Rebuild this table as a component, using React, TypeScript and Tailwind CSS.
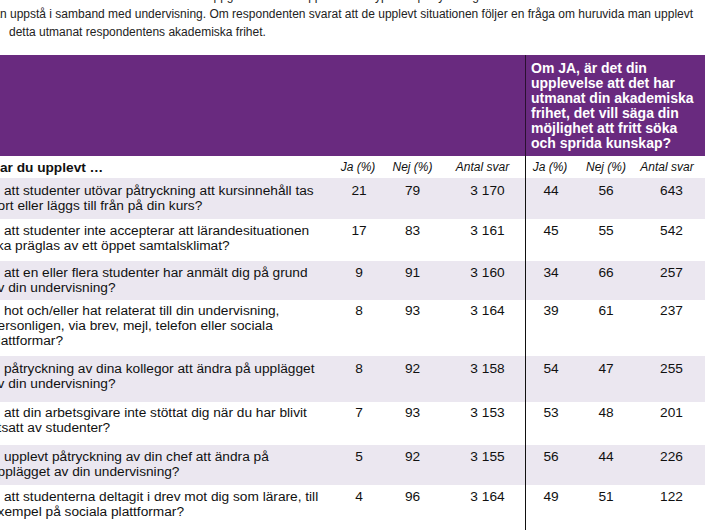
import React from "react";

type Row = {
  lines: string[];
  vals: string[];
  h: string;
  pt: string;
  shaded: boolean;
};

const rows: Row[] = [
  {
    lines: ["att studenter utövar påtryckning att kursinnehåll tas", "bort eller läggs till från på din kurs?"],
    vals: ["21", "79", "3 170", "44", "56", "643"],
    h: "h-[41px]",
    pt: "pt-[5px]",
    shaded: true,
  },
  {
    lines: ["att studenter inte accepterar att lärandesituationen", "ska präglas av ett öppet samtalsklimat?"],
    vals: ["17", "83", "3 161", "45", "55", "542"],
    h: "h-[42px]",
    pt: "pt-[4px]",
    shaded: false,
  },
  {
    lines: ["att en eller flera studenter har anmält dig på grund", "av din undervisning?"],
    vals: ["9", "91", "3 160", "34", "66", "257"],
    h: "h-[39px]",
    pt: "pt-[4px]",
    shaded: true,
  },
  {
    lines: [
      "hot och/eller hat relaterat till din undervisning,",
      "personligen, via brev, mejl, telefon eller sociala",
      "plattformar?",
    ],
    vals: ["8", "93", "3 164", "39", "61", "237"],
    h: "h-[56px]",
    pt: "pt-[3px]",
    shaded: false,
  },
  {
    lines: ["påtryckning av dina kollegor att ändra på upplägget", "av din undervisning?"],
    vals: ["8", "92", "3 158", "54", "47", "255"],
    h: "h-[46px]",
    pt: "pt-[5px]",
    shaded: true,
  },
  {
    lines: ["att din arbetsgivare inte stöttat dig när du har blivit", "utsatt av studenter?"],
    vals: ["7", "93", "3 153", "53", "48", "201"],
    h: "h-[43px]",
    pt: "pt-[3px]",
    shaded: false,
  },
  {
    lines: ["upplevt påtryckning av din chef att ändra på", "upplägget av din undervisning?"],
    vals: ["5", "92", "3 155", "56", "44", "226"],
    h: "h-[40px]",
    pt: "pt-[4px]",
    shaded: true,
  },
  {
    lines: ["att studenterna deltagit i drev mot dig som lärare, till", "exempel på sociala plattformar?"],
    vals: ["4", "96", "3 164", "49", "51", "122"],
    h: "h-[46px]",
    pt: "pt-[4px]",
    shaded: false,
  },
];

const grid = "grid grid-cols-[330px_55px_55px_85px_50px_62px_68px]";

export default function App() {
  return (
    <div
      className="w-[705px] h-[530px] overflow-hidden bg-white text-[#111]"
      style={{ fontFamily: '"Liberation Sans", Arial, sans-serif' }}
    >
      <div className="mt-[-13.5px] ml-[-12.7px] text-[12px] leading-[18px] text-[#222] whitespace-nowrap">
        <div>
          Tabellen nedan visar andelen lärare som uppger att de har upplevt olika typer av påtryckningar och situationer som
        </div>
        <div>
          kan uppstå i samband med undervisning. Om respondenten svarat att de upplevt situationen följer en fråga om huruvida man upplevt
        </div>
        <div className="pl-[21.7px]">detta utmanat respondentens akademiska frihet.</div>
      </div>

      <div className="mt-[14.5px] text-[13.7px] leading-[15px]">
        {/* purple header */}
        <div className={`${grid} h-[101px] bg-[#692a7f]`}>
          <div className="col-span-4" />
          <div className="col-span-3 border-l-[1.5px] border-[#2a1030] pl-[5px] pt-[5.5px] font-bold text-[14px] text-white whitespace-nowrap">
            <div>Om JA, är det din</div>
            <div>upplevelse att det har</div>
            <div>utmanat din akademiska</div>
            <div>frihet, det vill säga din</div>
            <div>möjlighet att fritt söka</div>
            <div>och sprida kunskap?</div>
          </div>
        </div>

        {/* column header row */}
        <div className={`${grid} h-[22px] items-center text-[12px] italic`}>
          <div className="not-italic font-bold text-[13.7px] ml-[-10px] whitespace-nowrap">Har du upplevt …</div>
          <div className="text-center pl-[1px]">Ja (%)</div>
          <div className="text-center">Nej (%)</div>
          <div className="text-center">Antal svar</div>
          <div className="h-full flex items-center justify-center border-l-[1.5px] border-[#111] pr-[1px]">Ja (%)</div>
          <div className="text-center">Nej (%)</div>
          <div className="text-center pr-[8px] whitespace-nowrap">Antal svar</div>
        </div>

        {rows.map((r, i) => (
          <div key={i} className={`${grid} ${r.h} ${r.shaded ? "bg-[#ebe7f0]" : "bg-white"}`}>
            <div className={`${r.pt} ml-[-10px] whitespace-nowrap`}>
              {r.lines.map((l, j) => (
                <div key={j} className={j === 0 ? "pl-[14px]" : ""}>
                  {l}
                </div>
              ))}
            </div>
            <div className={`${r.pt} text-center pl-[3px]`}>{r.vals[0]}</div>
            <div className={`${r.pt} text-center`}>{r.vals[1]}</div>
            <div className={`${r.pt} text-center pl-[10px]`}>{r.vals[2]}</div>
            <div className={`${r.pt} text-center border-l-[1.5px] border-[#111] pl-[1px]`}>{r.vals[3]}</div>
            <div className={`${r.pt} text-center`}>{r.vals[4]}</div>
            <div className={`${r.pt} text-center pl-[1px]`}>{r.vals[5]}</div>
          </div>
        ))}
      </div>
    </div>
  );
}
